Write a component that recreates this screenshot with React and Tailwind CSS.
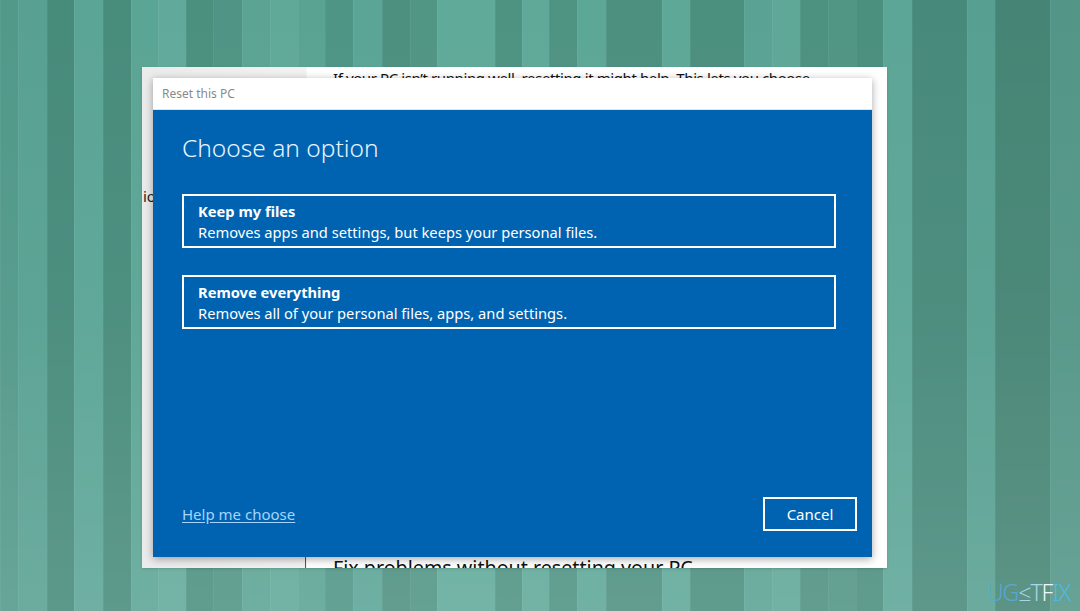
import React from 'react'

// wallpaper stripes: [width, colour]
const stripes = [
  [18, '#52998a'], [29, '#58a192'], [27, '#478b7b'], [29, '#5ba596'], [28, '#488c7c'],
  [27, '#5ba595'], [28, '#61aa9b'], [27, '#4b907f'], [29, '#4f9484'], [28, '#5ba494'],
  [28, '#60a999'], [27, '#5aa393'], [28, '#4e9585'], [29, '#5aa596'], [28, '#4d9080'],
  [27, '#519585'], [58, '#60aa9a'], [27, '#4e9382'], [27, '#60a999'], [28, '#4f9383'],
  [29, '#5da797'], [56, '#4d9080'], [28, '#5ea898'], [54, '#4b8f7f'], [28, '#5aa394'],
  [28, '#5fa797'], [28, '#4d9181'], [28, '#519585'], [27, '#4b8f7f'], [29, '#5ca697'],
  [55, '#478a7b'], [28, '#57a091'], [55, '#468575'], [30, '#539687'],
]

const OptionCard = ({ title, text }) => (
  <button className="w-[654px] h-[54px] border-2 border-white text-left pl-[14px] pt-[5px] flex flex-col">
    <span className="text-[14.7px] leading-[21px] font-bold text-white">{title}</span>
    <span className="text-[14.7px] leading-[21px] text-white">{text}</span>
  </button>
)

const App = () => {
  return (
    <div className="relative w-[1080px] h-[611px] overflow-hidden" style={{ fontFamily: '"Noto Sans", "Open Sans", sans-serif' }}>
      {/* Wallpaper */}
      <div className="absolute inset-0 flex">
        {stripes.map(([w, c], i) => (
          <div key={i} className="h-full shrink-0 border-l border-white/5" style={{ width: w, backgroundColor: c }} />
        ))}
      </div>
      <div className="absolute inset-0 bg-gradient-to-b from-transparent via-white/[0.03] to-white/[0.12]" />

      {/* Settings window behind */}
      <div className="absolute left-[142px] top-[67px] w-[745px] h-[501px] flex bg-white shadow-sm overflow-hidden">
        <div className="w-[164px] bg-gradient-to-r from-[#ebebeb] to-[#f2f2f2] flex flex-col">
          <div className="mt-[118px] pl-px text-[15px] leading-[22px] text-[#222]">ion</div>
        </div>
        <div className="flex-1 flex flex-col justify-between pl-[26px] border-l border-[#f6f6f6] relative">
          <p className="text-[15px] leading-[22px] tracking-[-0.4px] text-[#111] whitespace-nowrap">If your PC isn’t running well, resetting it might help. This lets you choose</p>
          <div className="h-[14px] overflow-hidden">
            <p className="text-[19.7px] leading-[28px] text-[#111] whitespace-nowrap">Fix problems without resetting your PC</p>
          </div>
          <div className="absolute left-[-2px] bottom-0 w-px h-[11px] bg-[#555]" />
        </div>
      </div>

      {/* Reset this PC dialog */}
      <div className="absolute left-[153px] top-[78px] w-[719px] h-[479px] flex flex-col shadow-[0_2px_8px_rgba(0,0,0,0.35)]">
        <div className="h-[32px] bg-white border-b border-[#d7e6f2] flex items-center pl-[9px]">
          <span className="text-[12px] text-[#8a8a8a]">Reset this PC</span>
        </div>
        <div className="flex-1 bg-[#0063b1] flex flex-col pl-[29px]">
          <h1 className="mt-[20px] text-[24.5px] leading-[36px] font-light text-[#eaf4fc]">Choose an option</h1>
          <div className="mt-[28px] flex flex-col gap-[27px]">
            <OptionCard title="Keep my files" text="Removes apps and settings, but keeps your personal files." />
            <OptionCard title="Remove everything" text="Removes all of your personal files, apps, and settings." />
          </div>
          <div className="mt-auto mb-[26px] pr-[15px] flex items-center justify-between">
            <a className="text-[15px] text-[#a5d5ff] underline underline-offset-2">Help me choose</a>
            <button className="w-[94px] h-[34px] border-2 border-white text-[15px] text-white">Cancel</button>
          </div>
        </div>
      </div>

      {/* Watermark */}
      <div className="absolute right-[10px] bottom-[7px] flex items-center text-[23px] leading-none font-light tracking-[-1px]">
        <span className="text-[#55a9d0]">UG</span>
        <span className="text-[#a8d6ea]">≤</span>
        <span className="text-[#a8d6ea]">T</span>
        <span className="text-[#eef7fa]">F</span>
        <span className="text-[#52b6e6]">IX</span>
      </div>
    </div>
  )
}

export default App
